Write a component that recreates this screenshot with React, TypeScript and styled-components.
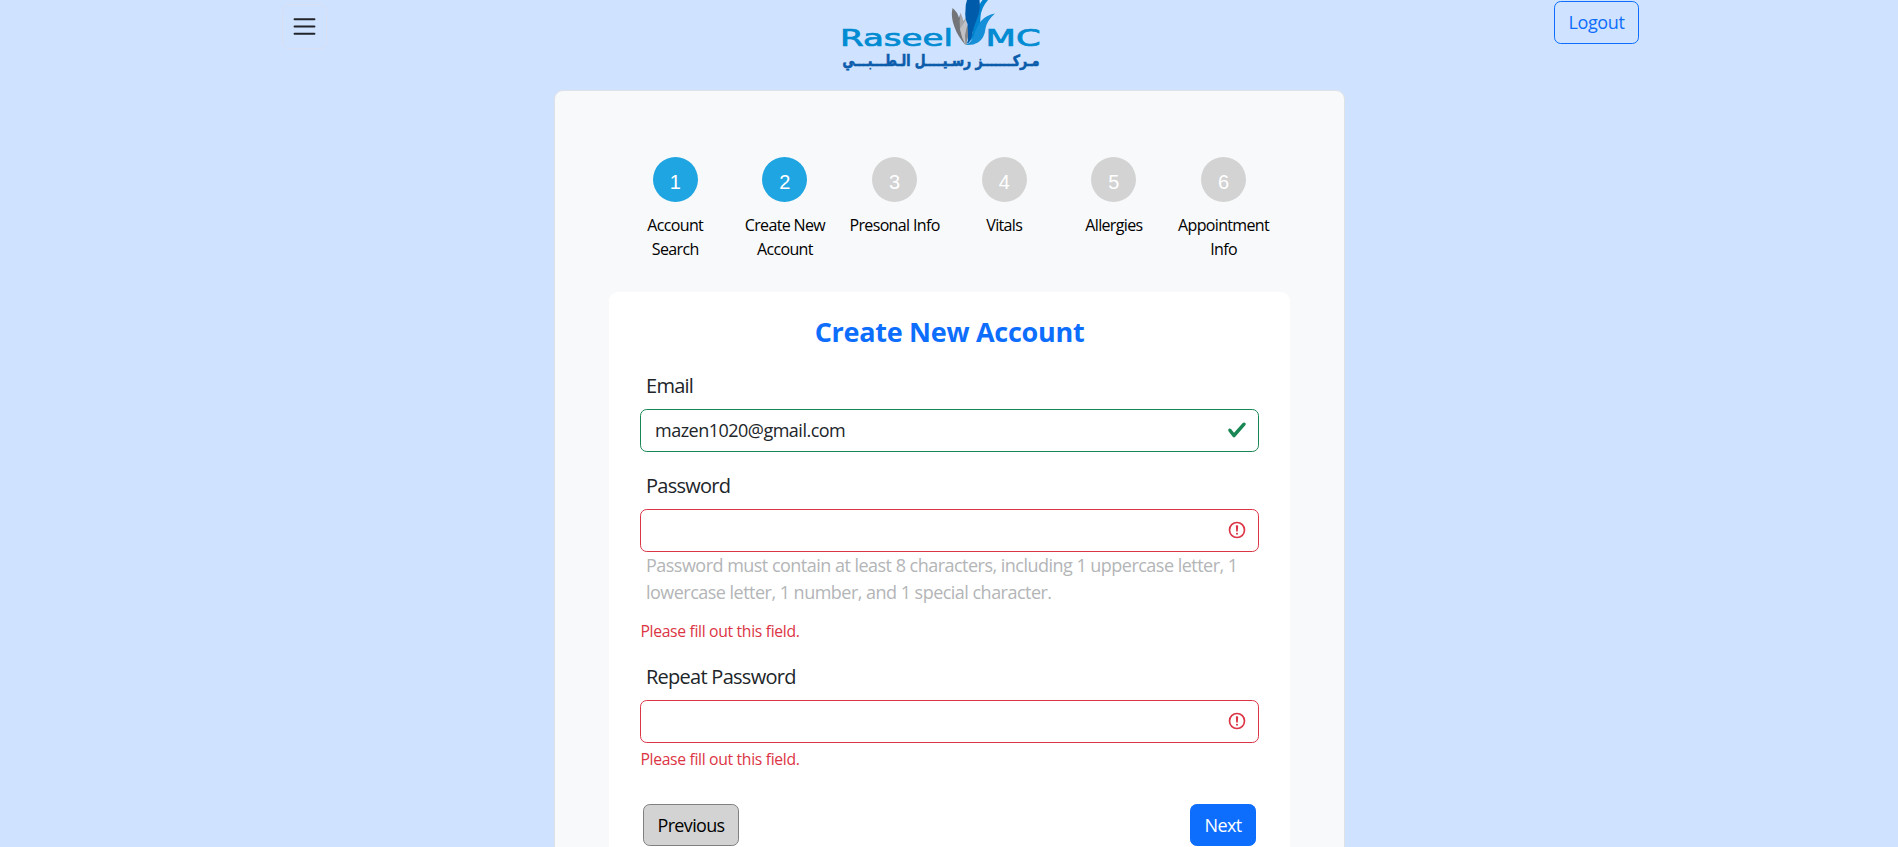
import React from "react";
import styled, { createGlobalStyle } from "styled-components";

const GlobalStyle = createGlobalStyle`
  *, *::before, *::after { box-sizing: border-box; }
  html { font-size: 18px; }
  body {
    margin: 0;
    height: 847px;
    overflow: hidden;
    background: #cfe2ff;
    color: #212529;
    font-family: "Open Sans", "Noto Sans", sans-serif;
    line-height: 1.5;
  }
`;

const Page = styled.div`
  height: 847px;
  overflow: hidden;
  display: flex;
  flex-direction: column;
`;

const Header = styled.header`
  flex: none;
  height: 90px;
  padding: 0 259px 0 282px;
  display: flex;
  justify-content: space-between;
  align-items: flex-start;
`;

const MenuButton = styled.button`
  width: 45px;
  height: 45px;
  margin: 4px 0 0;
  padding: 0;
  display: flex;
  align-items: center;
  justify-content: center;
  background: transparent;
  border: 1px solid #d9dff0;
  border-radius: 7px;
`;

const Logo = styled.svg`
  display: block;
  width: 200px;
  height: 76px;
  margin-right: 2px;
  overflow: visible;
`;

const Button = styled.button<{ $variant: "outline" | "muted" | "primary" }>`
  height: ${(p) => (p.$variant === "outline" ? "43px" : "42px")};
  margin-top: ${(p) => (p.$variant === "outline" ? "1px" : "0")};
  padding: 0;
  width: ${(p) =>
    ({ outline: "85px", muted: "96px", primary: "66px" })[p.$variant]};
  font: 400 18px/27px "Open Sans", sans-serif;
  letter-spacing: ${(p) => (p.$variant === "outline" ? "-0.37px" : "-0.65px")};
  border-radius: 6.75px;
  border: 1px solid
    ${(p) =>
      ({ outline: "#0d6efd", muted: "#808080", primary: "#0d6efd" })[
        p.$variant
      ]};
  background: ${(p) =>
    ({ outline: "transparent", muted: "#d3d3d3", primary: "#0d6efd" })[
      p.$variant
    ]};
  color: ${(p) =>
    ({ outline: "#0d6efd", muted: "#000", primary: "#fff" })[p.$variant]};
`;

const Card = styled.main`
  flex: none;
  width: 791px;
  height: 800px;
  margin-left: 554px;
  padding: 66px 54px 0;
  background: #f8f9fa;
  border: 1px solid #dee2e6;
  border-radius: 9px;
`;

const Steps = styled.ol`
  list-style: none;
  margin: 0 11.6px 0 11.4px;
  padding: 0;
  height: 135px;
  display: grid;
  grid-template-columns: repeat(6, 1fr);
`;

const Step = styled.li`
  display: flex;
  flex-direction: column;
  align-items: center;
  text-align: center;
`;

const StepCircle = styled.span<{ $active: boolean }>`
  width: 45px;
  height: 45px;
  margin-bottom: 11px;
  padding-top: 5px;
  border-radius: 50%;
  background: ${(p) => (p.$active ? "#1fa5e1" : "#d3d3d3")};
  color: #fff;
  font: 20px/41px "Liberation Sans", Arial, sans-serif;
`;

const StepLabel = styled.span`
  width: 100px;
  color: #000;
  font-size: 16px;
  line-height: 24px;
  letter-spacing: -0.65px;
`;

const Panel = styled.form`
  height: 620px;
  padding: 24px 31px 0;
  background: #fff;
  border-radius: 9px;
`;

const Title = styled.h1`
  margin: 0 0 23px;
  color: #0d6efd;
  text-align: center;
  font-size: 27px;
  font-weight: 700;
  line-height: 32px;
  letter-spacing: -0.28px;
`;

const Field = styled.div`
  margin-bottom: 19px;
`;

const Label = styled.label`
  display: block;
  margin: 0 0 8px 6px;
  font-size: 20px;
  line-height: 30px;
  letter-spacing: -0.73px;
`;

const InputBox = styled.div<{ $valid: boolean }>`
  height: 43px;
  padding: 0 11px 0 14px;
  display: flex;
  align-items: center;
  justify-content: space-between;
  background: #fff;
  border: 1px solid ${(p) => (p.$valid ? "#198754" : "#dc3545")};
  border-radius: 6.75px;
`;

const Input = styled.input`
  flex: 1;
  min-width: 0;
  padding: 0;
  border: 0;
  outline: 0;
  background: transparent;
  color: #212529;
  font: 400 18px/27px "Open Sans", sans-serif;
  letter-spacing: -0.51px;
`;

const StatusIcon = styled.svg`
  flex: none;
  width: 20px;
  height: 20px;
  margin-bottom: 1px;
`;

const Hint = styled.p`
  margin: 0 0 13px;
  padding: 0 5px 0 6px;
  color: #b3b5b7;
  font-size: 18px;
  line-height: 27px;
  letter-spacing: -0.52px;
`;

const ErrorText = styled.p`
  margin: 4px 0 0 0.4px;
  color: #dc3545;
  font-size: 15.75px;
  line-height: 24px;
  letter-spacing: -0.34px;
`;

const Actions = styled.div`
  margin: 33px 3px 0;
  display: flex;
  justify-content: space-between;
`;

const steps = [
  "Account Search",
  "Create New Account",
  "Presonal Info",
  "Vitals",
  "Allergies",
  "Appointment Info",
];

const CheckIcon = () => (
  <StatusIcon viewBox="0 0 8 8">
    <path
      fill="#198754"
      d="M2.3 6.73.6 4.53c-.4-1.04.46-1.4 1.1-.8l1.1 1.4 3.4-3.8c.6-.63 1.6-.27 1.2.7l-4 4.6c-.43.5-.8.4-1.1.1z"
    />
  </StatusIcon>
);

const AlertIcon = () => (
  <StatusIcon viewBox="0 0 12 12" fill="none" stroke="#dc3545">
    <circle cx="6" cy="6" r="4.5" />
    <path strokeLinejoin="round" d="M5.8 3.6h.4L6 6.5z" />
    <circle cx="6" cy="8.2" r=".6" fill="#dc3545" stroke="none" />
  </StatusIcon>
);

const RaseelLogo = () => (
  <Logo viewBox="840 0 200 76" role="img" aria-label="Raseel MC">
    <path fill="#737477" d="M952.5 8q5 4 6.500 10l1.500-5 2 14 3 18q-8-9-11-18-4-10-2-19z" />
    <path fill="#a5a6a9" d="M960.5 13q2 4 3 8l3-4 .5 28h-1.500q-4-8-5.500-16-1-8 .5-16z" />
    <path fill="#cccdd0" d="M960 29l7-11-1.500 27q-4-7-5.500-16z" opacity=".7" />
    <path fill="#85878b" d="M969 22q1 12-3.500 23l-.5-10q1-7 4-13z" />
    <path fill="#0083cf" d="M988 0q-7 8-7.500 17 0 12-6 20l-8 7q2-6 6-11 2-23 10-33z" />
    <path fill="#1590d8" d="M995 13.500q-8 7-9.500 15-1 10-7.500 14-5 3-12 2.500 6-3 8-10 3-9 7-14 5-6 14-7.500z" />
    <path fill="#005baa" d="M967 0h12.500q1.500 10-3 20-3 7-4 13-1 7-5 11 1-8 0-20-3-6-2-14 0-6 1.500-10z" />
    <g fill="#008bd2" stroke="#008bd2" strokeWidth=".7" fontFamily="DejaVu Sans" fontSize="23.5">
      <text x="840" y="46" textLength="113" lengthAdjust="spacingAndGlyphs">Raseel</text>
      <text x="985.5" y="46" textLength="55" lengthAdjust="spacingAndGlyphs">MC</text>
    </g>
    <text
      x="941"
      y="66"
      fill="#0b5cab"
      stroke="#0b5cab"
      strokeWidth=".7"
      fontFamily="DejaVu Sans"
      fontWeight="700"
      fontSize="15.5"
      textAnchor="middle"
      direction="rtl"
      textLength="197"
      lengthAdjust="spacingAndGlyphs"
    >
      مـركـــــــز رسـيــــل الـطـــبـــي
    </text>
  </Logo>
);

export default function App() {
  return (
    <>
      <GlobalStyle />
      <Page>
        <Header>
          <MenuButton aria-label="Menu">
            <svg width="27" height="27" viewBox="0 0 30 30">
              <path
                stroke="#212529"
                strokeLinecap="round"
                strokeMiterlimit="10"
                strokeWidth="2.3"
                d="M4 7h22M4 15h22M4 23h22"
              />
            </svg>
          </MenuButton>
          <RaseelLogo />
          <Button $variant="outline">Logout</Button>
        </Header>
        <Card>
          <Steps>
            {steps.map((label, i) => (
              <Step key={label}>
                <StepCircle $active={i < 2}>{i + 1}</StepCircle>
                <StepLabel>{label}</StepLabel>
              </Step>
            ))}
          </Steps>
          <Panel>
            <Title>Create New Account</Title>
            <Field>
              <Label>Email</Label>
              <InputBox $valid>
                <Input type="text" defaultValue="mazen1020@gmail.com" />
                <CheckIcon />
              </InputBox>
            </Field>
            <Field>
              <Label>Password</Label>
              <InputBox $valid={false}>
                <Input type="password" />
                <AlertIcon />
              </InputBox>
              <Hint>
                Password must contain at least 8 characters, including 1
                uppercase letter, 1 lowercase letter, 1 number, and 1 special
                character.
              </Hint>
              <ErrorText>Please fill out this field.</ErrorText>
            </Field>
            <Field>
              <Label>Repeat Password</Label>
              <InputBox $valid={false}>
                <Input type="password" />
                <AlertIcon />
              </InputBox>
              <ErrorText>Please fill out this field.</ErrorText>
            </Field>
            <Actions>
              <Button type="button" $variant="muted">Previous</Button>
              <Button type="button" $variant="primary">Next</Button>
            </Actions>
          </Panel>
        </Card>
      </Page>
    </>
  );
}
